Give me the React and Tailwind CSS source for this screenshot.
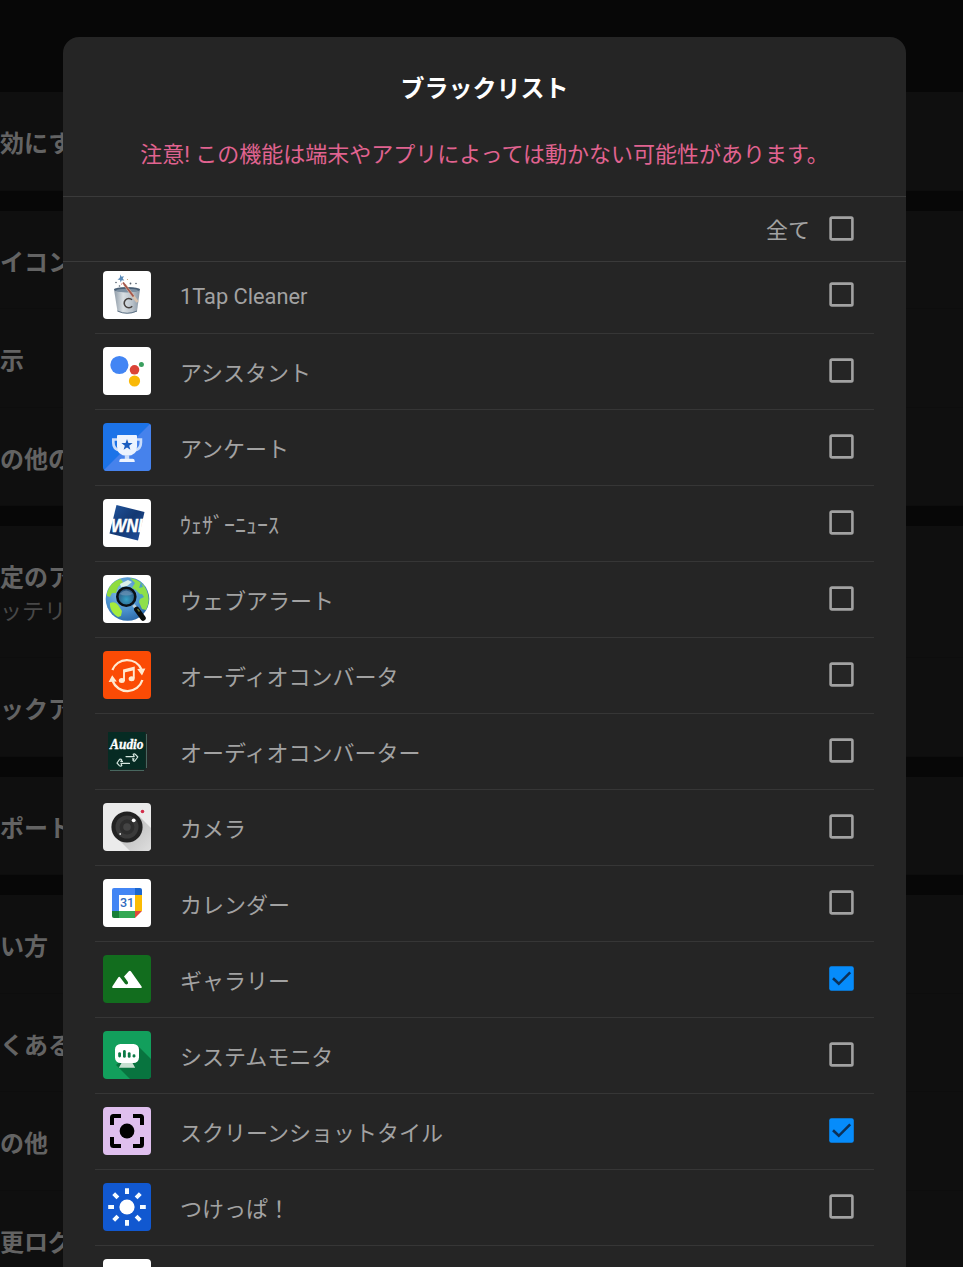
import { useState } from 'react';

const sections = [
  [{ title: '効にす' }],
  [{ title: 'イコン' }, { title: '示' }, { title: 'の他の' }],
  [{ title: '定のア', sub: 'ッテリー' }, { title: 'ックア' }],
  [{ title: 'ポート' }],
  [{ title: 'い方' }, { title: 'くある' }, { title: 'の他' }, { title: '更ログ' }],
];

function AppIcon({ children }) {
  return (
    <svg className="w-12 h-12 shrink-0 rounded-[4px]" viewBox="0 0 48 48">
      {children}
    </svg>
  );
}

function CleanerIcon() {
  return (
    <AppIcon>
      <defs>
        <linearGradient id="bucket" x1="0" x2="1" y1="0" y2="0">
          <stop offset="0" stopColor="#8f9ba7" />
          <stop offset="0.35" stopColor="#d9dfe3" />
          <stop offset="0.7" stopColor="#b9c2ca" />
          <stop offset="1" stopColor="#8795a3" />
        </linearGradient>
      </defs>
      <rect width="48" height="48" fill="#fff" />
      <path d="M11 18.5 Q24 14 37 18.5 L34 40.5 Q24 45 14.5 40.5Z" fill="url(#bucket)" />
      <ellipse cx="24" cy="18.5" rx="13" ry="2.6" fill="#4a5f75" />
      <ellipse cx="24" cy="19.6" rx="11" ry="1.8" fill="#7d90a2" />
      <path d="M14.5 40 Q24 44.5 34 40" fill="none" stroke="#5f7386" strokeWidth="1" />
      <path d="M21.5 13.5 L34.5 31" stroke="#d9c2ae" strokeWidth="2.8" />
      <path d="M20 11.5 L30.5 25.5" stroke="#a5574c" strokeWidth="1.9" />
      <path d="M17.5 3.5 l1 2.3 2.5-.5 -1.3 2.2 1.6 2 -2.6-.3 -1 2.3 -.7-2.5 -2.5-.5 2.2-1.5z" fill="#5a8ab8" />
      <g fill="#55616e">
        <circle cx="13" cy="11.5" r=".8" />
        <circle cx="16.5" cy="15" r=".8" />
        <circle cx="27.5" cy="12.5" r=".9" />
        <circle cx="33" cy="12.5" r=".8" />
        <circle cx="24.5" cy="8.5" r=".6" fill="#b99a72" />
        <circle cx="18.5" cy="13" r=".6" fill="#c65b5b" />
      </g>
      <path d="M29 28.8 A4.6 4.6 0 1 0 29.2 35.2" fill="none" stroke="#46413f" strokeWidth="1.6" />
    </AppIcon>
  );
}

function AssistantIcon() {
  return (
    <AppIcon>
      <rect width="48" height="48" fill="#fff" />
      <circle cx="16.4" cy="18" r="9.1" fill="#4285f4" />
      <circle cx="31.5" cy="22.8" r="4.8" fill="#db4437" />
      <circle cx="38.4" cy="17.4" r="2.5" fill="#3a9f5f" />
      <circle cx="31.5" cy="34" r="5.6" fill="#f9b908" />
    </AppIcon>
  );
}

function SurveyIcon() {
  return (
    <AppIcon>
      <rect width="48" height="48" fill="#1c73e8" />
      <path d="M48 0 V48 H0Z" fill="#4682ec" />
      <path d="M14.5 16.5 H10.3 V19.5 Q10.3 26.5 17 27.5 M33.5 16.5 H37.9 V19.5 Q37.9 26.5 31.2 27.5" fill="none" stroke="#c9dcfa" strokeWidth="2.7" />
      <path d="M14 13 Q14 12 15 12 H33 Q34 12 34 13 V23.5 Q34 32.8 24 32.8 Q14 32.8 14 23.5Z" fill="#ecf3fe" />
      <path d="M21.8 32 H26.2 V36.4 H21.8Z" fill="#c9dcfa" />
      <path d="M16.3 39 V38 Q16.3 35.8 18.5 35.8 H29.5 Q31.7 35.8 31.7 38 V39Z" fill="#ecf3fe" />
      <path d="M24 16 l1.4 4 4.2.1 -3.4 2.6 1.2 4.1 -3.4-2.4 -3.4 2.4 1.2-4.1 -3.4-2.6 4.2-.1z" fill="#1a5dc0" />
    </AppIcon>
  );
}

function WeatherIcon() {
  return (
    <AppIcon>
      <defs>
        <linearGradient id="wni" x1="0" x2="1" y1="0" y2="1">
          <stop offset="0" stopColor="#2257a0" />
          <stop offset="0.5" stopColor="#143872" />
          <stop offset="1" stopColor="#2052a0" />
        </linearGradient>
      </defs>
      <rect width="48" height="48" fill="#fff" />
      <path d="M13.5 6 L41.5 13 L35 41.5 L6.5 34.5Z" fill="url(#wni)" />
      <text x="8" y="32.5" textLength="31.5" lengthAdjust="spacingAndGlyphs" className="font-['Liberation_Sans'] font-bold italic text-[19px]" fill="#fff" stroke="#fff" strokeWidth=".5">
        WNI
      </text>
    </AppIcon>
  );
}

function GlobeIcon() {
  return (
    <AppIcon>
      <defs>
        <radialGradient id="sea" cx=".4" cy=".35" r=".7">
          <stop offset="0" stopColor="#8cc4e8" />
          <stop offset="0.6" stopColor="#4a90cc" />
          <stop offset="1" stopColor="#2a68a8" />
        </radialGradient>
        <radialGradient id="lens" cx=".5" cy=".65" r=".6">
          <stop offset="0" stopColor="#35a0c4" />
          <stop offset="1" stopColor="#2b4f7a" />
        </radialGradient>
      </defs>
      <rect width="48" height="48" fill="#fff" />
      <circle cx="24.5" cy="24" r="21.8" fill="url(#sea)" />
      <path d="M4 18 Q7 7 17.5 4 L20 7 L15 12 L13 18 L9 18 L7 22 L4 21Z" fill="#8fdc3e" />
      <path d="M7 28 Q12 26 15 30 L19 36 L18 41 L15 42 Q8 38 7 31Z" fill="#a5ec3c" />
      <path d="M27 3 Q39 5 43.5 15 Q48 25 43 35 L39 34 L36 27 L38 20 L33 15 L29 13 L32 8Z" fill="#8ee04a" />
      <path d="M17 9 L25 5 L29 7 L24 11 L18 12Z" fill="#dcefe8" />
      <path d="M35 20 l4-1 2 3 -4 2z M38 7 l2 5 -4 1z" fill="#4b9ecb" />
      <path d="M30.5 30 L34.5 35" stroke="#c3d2d8" strokeWidth="3" />
      <path d="M33.8 34.5 L40 43" stroke="#0b0d0b" strokeWidth="5.5" strokeLinecap="round" />
      <path d="M34.5 34 L36.5 36.5" stroke="#67702e" strokeWidth="1.4" />
      <circle cx="23.3" cy="21.8" r="9" fill="url(#lens)" stroke="#0a0f14" strokeWidth="2.6" />
      <path d="M16.5 19 Q23 12 30 19 Q23 22 16.5 19Z" fill="#7297b9" opacity=".65" />
    </AppIcon>
  );
}

function ConverterIcon() {
  return (
    <AppIcon>
      <rect width="48" height="48" fill="#fb4b05" />
      <g fill="none" stroke="#ffe9d0" strokeWidth="2.3">
        <path d="M9.4 19 A15.8 15.8 0 0 1 38.4 18.2" />
        <path d="M39.4 29 A15.8 15.8 0 0 1 9.6 30" />
      </g>
      <path d="M34.2 18 L42.4 17.6 L39 24.4Z M5.6 31 L9.2 24.2 L13.8 30.6Z" fill="#ffe9d0" />
      <path d="M21 30 V19.2 L30.8 16.8 V27.6" fill="none" stroke="#ffe9d0" strokeWidth="1.9" />
      <path d="M21 20.4 L30.8 18" stroke="#ffe9d0" strokeWidth="2.4" />
      <ellipse cx="18.8" cy="29.6" rx="3" ry="2.5" fill="#ffe9d0" />
      <ellipse cx="28.6" cy="27.8" rx="3" ry="2.5" fill="#ffe9d0" />
    </AppIcon>
  );
}

function AudioIcon() {
  return (
    <AppIcon>
      <rect x="5" y="5" width="37.5" height="37.5" fill="#062b23" />
      <path d="M43.5 7 V41" stroke="#48675f" strokeWidth="1" />
      <path d="M7 43.5 H41" stroke="#48675f" strokeWidth="1" />
      <text x="7" y="21.5" textLength="33.5" lengthAdjust="spacingAndGlyphs" className="font-['Liberation_Serif'] font-bold italic text-[14px]" fill="#fff" stroke="#fff" strokeWidth=".3">
        Audio
      </text>
      <g fill="none" stroke="#d5e6df" strokeWidth="1.2" strokeLinejoin="round" strokeLinecap="round">
        <path d="M23 29.6 H31.2 L30.2 27.2 Q31.4 26.4 32.4 27.4 L34.8 30 L31.8 34 Q30.6 34.6 30 33.4 L31 31.8 H29.5" />
        <path d="M26.5 36.4 H18 L18.8 38.6 Q17.6 39.8 16.4 38.6 L14 36 L16.6 32.4 Q18 31.8 18.8 33 L17.8 34.4 H19.5" />
      </g>
    </AppIcon>
  );
}

function CameraIcon() {
  return (
    <AppIcon>
      <defs>
        <linearGradient id="shade" x1=".2" x2="1" y1=".2" y2="1">
          <stop offset="0" stopColor="#b8b8b8" />
          <stop offset="1" stopColor="#dedede" />
        </linearGradient>
      </defs>
      <rect width="48" height="48" fill="#ebebeb" />
      <path d="M36 13 L48 25 V48 H27 L13 34Z" fill="url(#shade)" />
      <circle cx="24" cy="24" r="15.6" fill="#222" />
      <circle cx="24" cy="24" r="11.5" fill="#3a3a3a" />
      <circle cx="24" cy="24" r="7.4" fill="#2d2d2d" />
      <circle cx="24" cy="24" r="3.8" fill="#444" />
      <circle cx="30.7" cy="17.3" r="1.9" fill="#fff" />
      <circle cx="17.2" cy="31" r=".9" fill="#ddd" />
      <circle cx="39.5" cy="8.5" r="1.8" fill="#d32f4c" />
    </AppIcon>
  );
}

function CalendarIcon() {
  return (
    <AppIcon>
      <rect width="48" height="48" fill="#fff" />
      <path d="M11 9 H32 V16 H16 V32 H9 V11 Q9 9 11 9Z" fill="#4285f4" />
      <path d="M32 9 H37 Q39 9 39 11 V16 H32Z" fill="#1b66ce" />
      <path d="M32 16 H39 V32 H32Z" fill="#fbbc04" />
      <path d="M16 32 H32 V39 H16Z" fill="#34a853" />
      <path d="M9 32 H16 V39 H11 Q9 39 9 37Z" fill="#188038" />
      <path d="M32 32 H39 L32 39Z" fill="#e0483a" />
      <text x="24" y="28.3" textAnchor="middle" className="font-['Roboto'] font-medium text-[12.5px]" fill="#2c6bc0">
        31
      </text>
    </AppIcon>
  );
}

function GalleryIcon() {
  return (
    <AppIcon>
      <rect width="48" height="48" fill="#126d1e" />
      <path d="M9.3 31.5 L15.2 22.5 Q16.2 21 17.2 22.5 L22 28.8 Q23.5 30.2 24.8 28.8 Q25.5 27.8 24.6 26.5 L21 21.6 L25.8 16.2 Q27 15 28 16.4 L38.6 31.4 Q39.4 33 37.8 33 H10.2 Q8.7 33 9.3 31.5Z" fill="#fff" />
    </AppIcon>
  );
}

function MonitorIcon() {
  return (
    <AppIcon>
      <rect width="48" height="48" fill="#129f5c" />
      <path d="M34.5 14.5 L48 28 V48 H27 L13 34Z" fill="#08743f" />
      <path d="M18.5 32 H29.5 L32.2 36.8 H15.8Z" fill="#c6dfd0" />
      <rect x="12" y="13" width="24" height="19" rx="5.5" fill="#fff" />
      <g stroke="#0b7a46" strokeWidth="2.8" strokeLinecap="round">
        <path d="M16.6 22.6 V25" />
        <path d="M21.4 20.4 V25.4" />
        <path d="M26.2 22.6 V25.4" />
        <path d="M31 24.6 V25.2" />
      </g>
    </AppIcon>
  );
}

function ScreenshotIcon() {
  return (
    <AppIcon>
      <rect width="48" height="48" fill="#dfbfee" />
      <path
        d="M9 18 V10.5 Q9 9 10.5 9 H18 M30 9 H37.5 Q39 9 39 10.5 V18 M39 30 V37.5 Q39 39 37.5 39 H30 M18 39 H10.5 Q9 39 9 37.5 V30"
        fill="none"
        stroke="#000"
        strokeWidth="4"
      />
      <circle cx="24" cy="24" r="7.4" fill="#000" />
    </AppIcon>
  );
}

function BrightIcon() {
  return (
    <AppIcon>
      <rect width="48" height="48" fill="#1158d0" />
      <circle cx="24" cy="24" r="7.6" fill="#fff" />
      <g stroke="#f4fbff" strokeWidth="4">
        <path d="M24 5.2 V11 M24 37 V42.8 M5.2 24 H11 M37 24 H42.8" />
        <path d="M10.7 10.7 L14.9 14.9 M33.1 33.1 L37.3 37.3 M10.7 37.3 L14.9 33.1 M33.1 14.9 L37.3 10.7" />
      </g>
    </AppIcon>
  );
}

function BlankIcon() {
  return (
    <AppIcon>
      <rect width="48" height="48" fill="#fff" />
    </AppIcon>
  );
}

const apps = [
  { name: '1Tap Cleaner', latin: true, Icon: CleanerIcon },
  { name: 'アシスタント', Icon: AssistantIcon },
  { name: 'アンケート', Icon: SurveyIcon },
  { name: 'ｳｪｻﾞｰﾆｭｰｽ', Icon: WeatherIcon },
  { name: 'ウェブアラート', Icon: GlobeIcon },
  { name: 'オーディオコンバータ', Icon: ConverterIcon },
  { name: 'オーディオコンバーター', Icon: AudioIcon },
  { name: 'カメラ', Icon: CameraIcon },
  { name: 'カレンダー', Icon: CalendarIcon },
  { name: 'ギャラリー', Icon: GalleryIcon },
  { name: 'システムモニタ', Icon: MonitorIcon },
  { name: 'スクリーンショットタイル', Icon: ScreenshotIcon },
  { name: 'つけっぱ！', Icon: BrightIcon },
  { name: '', Icon: BlankIcon },
];

function Checkbox({ checked, onChange }) {
  return (
    <button type="button" role="checkbox" aria-checked={checked} onClick={onChange} className="shrink-0 cursor-pointer">
      <svg className="block w-[25px] h-[25px]" viewBox="0 0 25 25" fill="none">
        {checked ? (
          <>
            <rect x=".2" y=".2" width="24.6" height="24.6" rx="2.2" fill="#068cfb" />
            <path d="M4 12.2 L9.8 17.8 L21.2 6.4" stroke="#0c3158" strokeWidth="2.6" />
          </>
        ) : (
          <rect x="1.6" y="1.6" width="21.8" height="21.8" rx="1.2" stroke="#a2a2a2" strokeWidth="2.6" />
        )}
      </svg>
    </button>
  );
}

function App() {
  const [checked, setChecked] = useState([9, 11]);

  const toggle = (index) => {
    setChecked((prev) => (prev.includes(index) ? prev.filter((i) => i !== index) : [...prev, index]));
  };

  const allChecked = checked.length === apps.length;

  return (
    <div className="relative w-full h-[1267px] overflow-hidden bg-[#070707] font-['Roboto','Noto_Sans_CJK_JP',sans-serif]">
      {/* Settings page behind the dialog */}
      <div className="flex flex-col gap-5 pt-[92px]">
        {sections.map((rows, i) => (
          <div key={i} className="bg-[#0f0f0f]">
            {rows.map((row) => (
              <div
                key={row.title}
                className={`flex flex-col justify-center pt-[7px] border-b border-[#0d0d0d] whitespace-nowrap ${row.sub ? 'h-[132px]' : 'h-[98.5px]'}`}
              >
                <div className="text-2xl leading-[34px] font-bold text-[#636363]">{row.title}</div>
                {row.sub && <div className="text-[22px] leading-[34px] text-[#484848]">{row.sub}</div>}
              </div>
            ))}
          </div>
        ))}
      </div>

      {/* Dialog */}
      <div className="absolute top-[37px] left-[63px] w-[843px] h-[1240px] flex flex-col rounded-t-2xl bg-[#252525] overflow-hidden">
        <div className="h-[160px] shrink-0 pt-[34px] border-b border-[#3a3a3a] text-center">
          <h1 className="text-2xl leading-9 font-bold text-white">ブラックリスト</h1>
          <p className="mt-[30px] text-[22px] leading-9 text-[#e16390] whitespace-nowrap">
            注意! この機能は端末やアプリによっては動かない可能性があります。
          </p>
        </div>

        <div className="h-[65px] shrink-0 flex items-center justify-end gap-[19px] pr-[52px] pb-0.5 border-b border-[#3a3a3a]">
          <span className="pt-1 text-[22px] text-[#a2a2a2]">全て</span>
          <Checkbox checked={allChecked} onChange={() => setChecked(allChecked ? [] : apps.map((_, i) => i))} />
        </div>

        <div className="flex-1 overflow-hidden px-8">
          <div className="-mt-1">
            {apps.map(({ name, latin, Icon }, i) => (
              <div key={i} className="h-[76px] flex items-center pl-2 pr-5 pb-0.5 border-b border-[#363636]">
                <Icon />
                <span
                  className={`ml-[29px] flex-1 leading-8 text-[#a2a2a2] whitespace-nowrap ${latin ? 'pt-[5px] text-[21.8px]' : 'pt-[7px] text-[22px]'}`}
                >
                  {name}
                </span>
                <Checkbox checked={checked.includes(i)} onChange={() => toggle(i)} />
              </div>
            ))}
          </div>
        </div>
      </div>
    </div>
  );
}

export default App;
